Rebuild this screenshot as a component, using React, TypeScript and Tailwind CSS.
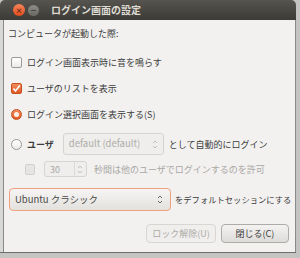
import React from 'react';

const font = { fontFamily: '"Noto Sans CJK JP", "DejaVu Sans", sans-serif' };

const Arrows: React.FC<{ color?: string }> = ({ color = '#888' }) => (
  <svg width="6" height="11" viewBox="0 0 6 11">
    <path d="M1 4 L3 2 L5 4" fill="none" stroke={color} strokeWidth="1" />
    <path d="M1 7 L3 9 L5 7" fill="none" stroke={color} strokeWidth="1" />
  </svg>
);

const App: React.FC = () => {
  return (
    <div className="w-[300px] h-[258px] bg-[#c4c4c2] overflow-hidden" style={font}>
      <div className="w-[296px] h-[253px] flex flex-col">
        {/* title bar */}
        <div className="h-[20px] shrink-0 rounded-t-[5px] bg-gradient-to-b from-[#55544f] to-[#3c3b37] flex items-center pl-[13px]">
          <div className="w-[12px] h-[12px] rounded-full bg-gradient-to-b from-[#f6855a] to-[#df4b18] flex items-center justify-center text-[7px] leading-none text-[#5a2210] font-bold">
            ×
          </div>
          <div className="w-[11px] h-[11px] rounded-full bg-gradient-to-b from-[#8f8d87] to-[#6a6863] ml-[3px] flex items-center justify-center">
            <div className="w-[5px] h-[1px] bg-[#47463f]" />
          </div>
          <span className="ml-[12px] text-[10px] font-bold text-[#dfdbd2] leading-none">ログイン画面の設定</span>
        </div>

        {/* body */}
        <div className="flex-1 flex">
          <div className="w-[3px] bg-[#d8d8d6]" />
          <div className="w-[1px] bg-[#8a8a88]" />
          <div className="flex-1 bg-[#f2f1f0] flex flex-col pl-[4px] text-[9px] text-[#3c3c3c] leading-none">
            <div className="h-[12px] mt-[7px] flex items-center">コンピュータが起動した際:</div>

            <div className="h-[14px] mt-[16px] flex items-center pl-[3px]">
              <div className="w-[11px] h-[11px] rounded-[2px] border border-[#9c9a96] bg-gradient-to-b from-white to-[#ecebe9]" />
              <span className="ml-[5px]">ログイン画面表示時に音を鳴らす</span>
            </div>

            <div className="h-[14px] mt-[12px] flex items-center pl-[3px]">
              <div className="w-[11px] h-[11px] rounded-[2px] border border-[#c5501f] bg-gradient-to-b from-[#f58b5d] to-[#e0581f] flex items-center justify-center">
                <svg width="9" height="9" viewBox="0 0 9 9">
                  <path d="M1.5 4.5 L3.5 7 L7.8 1.5" fill="none" stroke="#ffffff" strokeWidth="1.6" />
                </svg>
              </div>
              <span className="ml-[5px]">ユーザのリストを表示</span>
            </div>

            <div className="h-[14px] mt-[12px] flex items-center pl-[3px]">
              <div className="w-[11px] h-[11px] rounded-full border border-[#c5501f] bg-gradient-to-b from-[#f58b5d] to-[#e0581f] flex items-center justify-center">
                <div className="w-[5px] h-[5px] rounded-full bg-[#fdf1ea]" />
              </div>
              <span className="ml-[5px]">ログイン選択画面を表示する(S)</span>
            </div>

            <div className="h-[22px] mt-[12px] flex items-center pl-[3px]">
              <div className="w-[11px] h-[11px] rounded-full border border-[#9c9a96] bg-gradient-to-b from-white to-[#ecebe9]" />
              <span className="ml-[5px] font-bold">ユーザ</span>
              <div className="ml-[9px] w-[101px] h-[22px] rounded-[3px] border border-[#d6d4d0] bg-[#efeeec] flex items-center justify-between px-[5px] text-[#aeaca8]">
                <span className="text-[9.5px]">default (default)</span>
                <Arrows color="#c2c0bc" />
              </div>
              <span className="ml-[5px]">として自動的にログイン</span>
            </div>

            <div className="h-[16px] mt-[6px] flex items-center pl-[17px] text-[#a9a7a3]">
              <div className="w-[10px] h-[11px] rounded-[2px] border border-[#d2d0cc] bg-[#e6e5e3]" />
              <div className="ml-[9px] w-[43px] h-[16px] rounded-[3px] border border-[#d6d4d0] bg-[#efeeec] flex items-center pl-[5px] pr-[3px] justify-between">
                <span>30</span>
                <div className="h-full border-l border-[#dcdad6] pl-[2px] flex items-center">
                  <Arrows color="#c2c0bc" />
                </div>
              </div>
              <span className="ml-[7px]">秒間は他のユーザでログインするのを許可</span>
            </div>

            <div className="h-[23px] mt-[11px] flex items-center pl-[1px]">
              <div className="w-[162px] h-[23px] rounded-[4px] border border-[#f0a07c] bg-gradient-to-b from-[#f6f5f4] to-[#e3e1de] flex items-center justify-between pl-[5px] pr-[7px] text-[#4a4946]">
                <span className="text-[9.5px]">Ubuntu クラシック</span>
                <Arrows color="#6a6864" />
              </div>
              <span className="ml-[4px] text-[8.3px]">をデフォルトセッションにする</span>
            </div>

            <div className="h-[19px] mt-[13px] flex items-center justify-end pr-[6px] gap-[5px]">
              <div className="w-[70px] h-[19px] rounded-[4px] border border-[#d8d6d2] bg-[#f0efed] flex items-center justify-center text-[#adaba7]">
                ロック解除(U)
              </div>
              <div className="w-[68px] h-[19px] rounded-[4px] border border-[#aeaca8] bg-gradient-to-b from-[#f4f3f2] to-[#dedcd9] flex items-center justify-center text-[#3c3c3c]">
                閉じる(C)
              </div>
            </div>
          </div>
          <div className="w-[1px] bg-[#8a8a88]" />
        </div>
        <div className="h-[1px] bg-[#6e6e6c]" />
      </div>
    </div>
  );
};

export default App;
